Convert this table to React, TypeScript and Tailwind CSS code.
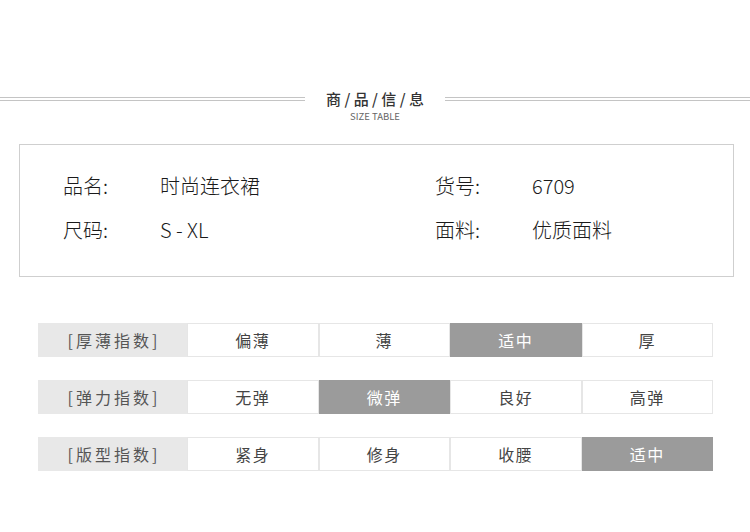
import React from "react";

const font = { fontFamily: '"Noto Sans CJK SC", "Noto Sans", sans-serif' };

type Row = { label: string; items: string[]; active: number };

const rows: Row[] = [
  { label: "[厚薄指数]", items: ["偏薄", "薄", "适中", "厚"], active: 2 },
  { label: "[弹力指数]", items: ["无弹", "微弹", "良好", "高弹"], active: 1 },
  { label: "[版型指数]", items: ["紧身", "修身", "收腰", "适中"], active: 3 },
];

function DoubleLine() {
  return (
    <div className="flex-1 flex flex-col gap-[2px]">
      <div className="h-[1px] bg-[#c4c4c4]" />
      <div className="h-[1px] bg-[#c4c4c4]" />
    </div>
  );
}

export default function App() {
  return (
    <div className="w-[750px] h-[532px] bg-white text-[#333] overflow-hidden" style={font}>
      <div className="h-[89px]" />
      <div className="flex items-center h-[20px]">
        <div className="w-[305px] flex"><DoubleLine /></div>
        <div className="flex-1 flex justify-center text-[15px] font-medium text-[#333]">
          商 / 品 / 信 / 息
        </div>
        <div className="w-[305px] flex"><DoubleLine /></div>
      </div>
      <div className="flex justify-center text-[9.5px] text-[#666] leading-[12px] mt-[1px]">SIZE TABLE</div>

      <div className="ml-[19px] mt-[22px] w-[715px] h-[133px] border-[1.5px] border-[#cfcfcf] px-[43px] pt-[27px]">
        <div className="grid grid-cols-[97px_275px_97px_1fr] gap-y-[17px] text-[20px] leading-[27px] text-[#1a1a1a] font-light">
          <div>品名:</div>
          <div>时尚连衣裙</div>
          <div>货号:</div>
          <div>6709</div>
          <div>尺码:</div>
          <div>S - XL</div>
          <div>面料:</div>
          <div>优质面料</div>
        </div>
      </div>

      <div className="ml-[38px] mt-[46px] flex flex-col gap-[23px]">
        {rows.map((r) => (
          <div key={r.label} className="flex h-[34px] text-[16px] tracking-[1.5px]">
            <div className="w-[149px] bg-[#e8e8e8] flex items-center justify-center text-[#555] tracking-[3px] pl-[3px]">
              {r.label}
            </div>
            {r.items.map((it, i) => (
              <div
                key={it + i}
                className={
                  i === r.active
                    ? "w-[131.5px] bg-[#9b9b9b] text-white flex items-center justify-center"
                    : "w-[131.5px] bg-white border border-[#e6e6e6] text-[#444] flex items-center justify-center"
                }
              >
                {it}
              </div>
            ))}
          </div>
        ))}
      </div>
    </div>
  );
}
